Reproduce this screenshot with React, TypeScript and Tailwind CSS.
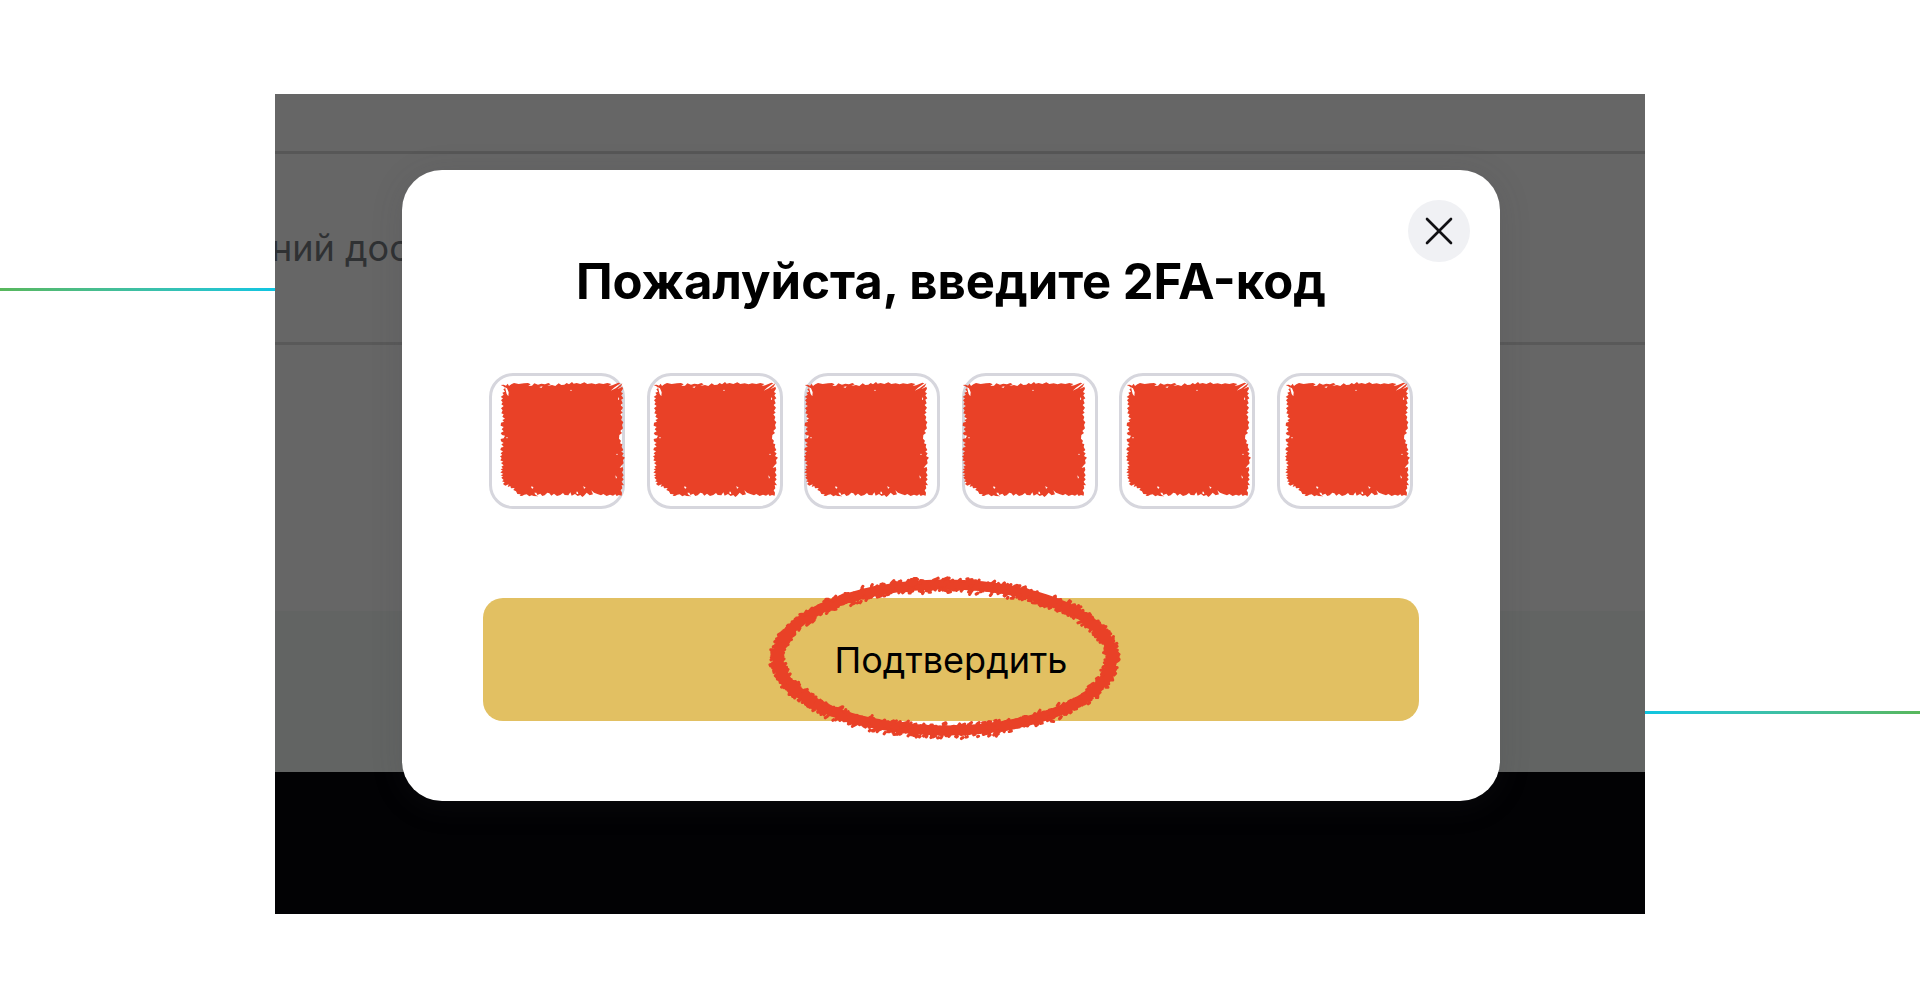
import React from 'react';
import { X } from 'lucide-react';

const digits = [
  { id: 1, mark: 'left-[11px]' },
  { id: 2, mark: 'left-[6px]' },
  { id: 3, mark: 'left-0' },
  { id: 4, mark: 'left-0' },
  { id: 5, mark: 'left-[7px]' },
  { id: 6, mark: 'left-[8px]' },
];

// Small seeded generator, so the crayon looks the same on every render
const createRandom = (seed: number) => () => {
  seed = (seed * 1664525 + 1013904223) % 4294967296;
  return seed / 4294967296;
};

// Short bristle strokes scattered along an ellipse
const buildBristles = (cx: number, cy: number, rx: number, ry: number, count: number) => {
  const random = createRandom(11);
  let d = '';
  for (let i = 0; i < count; i++) {
    const t = (i / count) * Math.PI * 2 + 0.04;
    const spread = (random() * 1.4 + random() * 0.6 - 1) * 8;
    const x = cx + (rx + spread) * Math.cos(t);
    const y = cy + (ry + spread) * Math.sin(t);
    const angle = -0.5 + (random() - 0.5) * 1.2;
    const length = 1 + random() * 2;
    const dx = Math.cos(angle) * length;
    const dy = Math.sin(angle) * length;
    d += `M${(x - dx / 2).toFixed(1)} ${(y - dy / 2).toFixed(1)}l${dx.toFixed(1)} ${dy.toFixed(1)}`;
  }
  return d;
};

const bristles = buildBristles(178, 84, 167, 73, 1900);

const CrayonSquare: React.FC<{ className: string }> = ({ className }) => (
  <svg viewBox="36 32 375 348" className={`pointer-events-none absolute top-2 h-[116px] w-[125px] ${className}`} aria-hidden="true">
    <path
      fill="#e94127"
      d="M38 44L47 43L54 46L59 40L63 47L70 42L78 38L92 41L108 39L120 38L128 42L121 47L132 46L139 39L150 43L160 40L171 42L181 38L188 42L178 47L192 44L202 47L212 39L220 44L229 43L236 38L243 42L252 35L257 40L266 38L277 41L289 36L298 41L311 39L323 42L333 39L346 41L358 38L370 41L362 47L373 45L391 37L397 39L378 52L368 61L383 54L403 39L399 48L388 57L403 49L405 55L399 65L405 69L400 75L406 84L400 88L404 99L398 104L405 112L399 121L404 127L397 132L403 140L400 149L406 156L402 164L405 174L397 182L402 188L394 194L393 205L399 211L396 219L403 222L401 230L406 239L400 244L407 249L402 257L411 262L405 269L407 279L400 286L395 293L404 290L406 299L402 306L407 315L402 321L407 327L401 334L408 345L401 344L403 354L398 360L402 367L401 376L393 374L386 377L382 372L375 376L366 373L356 377L346 371L339 375L330 372L318 367L310 360L315 372L305 375L296 367L288 376L283 380L277 374L269 377L261 371L251 376L247 366L241 375L230 374L225 368L217 374L207 377L198 370L190 376L184 369L178 367L170 375L163 377L157 370L148 374L145 367L139 367L143 374L151 378L137 377L131 375L124 378L116 372L109 373L102 377L95 376L98 372L88 371L84 363L76 359L80 353L69 354L67 347L59 350L62 342L52 346L45 341L50 336L42 333L47 329L40 322L45 318L38 315L46 311L37 306L44 301L38 297L45 294L40 289L47 285L39 278L46 274L37 270L41 263L36 258L43 254L38 249L45 243L37 239L39 232L47 229L40 222L47 218L39 213L38 206L47 204L51 196L42 194L38 188L47 183L41 177L47 170L38 166L39 157L48 154L43 149L51 145L43 139L47 132L40 129L44 120L39 114L47 107L40 102L44 96L39 90L45 84L38 80L47 73L43 67L51 64L46 57L52 53L46 48Z"
    />
    <g fill="#fff">
      <path d="M51 51L57 54L62 66L61 78L56 71ZM382 315L387 321L384 325ZM130 348L136 350L135 355L130 353ZM286 347L293 352L288 355ZM265 364L269 364L271 371L266 371ZM391 80L394 86L390 90ZM402 204L397 207L400 213ZM154 50L164 48L160 53Z" />
      <circle cx="249" cy="60" r="2" />
      <circle cx="57" cy="202" r="2" />
      <circle cx="387" cy="252" r="2" />
    </g>
  </svg>
);

const CrayonEllipse: React.FC = () => (
  <svg
    viewBox="0 0 356 168"
    className="pointer-events-none absolute -top-6 left-1/2 h-[168px] w-[356px] -translate-x-[184px]"
    fill="none"
    stroke="#e94127"
    strokeLinecap="round"
    aria-hidden="true"
  >
    <path strokeWidth="10" strokeLinecap="butt" d="M345 85A167 73 0 1 1 345 82" />
    <path strokeWidth="3" d={bristles} />
  </svg>
);

// Page that stays dimmed behind the dialog
const DimmedPage: React.FC = () => (
  <div className="col-start-1 row-start-1 flex flex-col overflow-hidden bg-[#666666]">
    <div className="h-[60px] border-b-3 border-[#575757]" />
    <div className="flex h-[191px] items-center border-b-3 border-[#595959]">
      <p className="-ml-1 text-4xl text-[#2f3133]">ний дос</p>
    </div>
    <div className="h-[266px]" />
    <div className="h-[161px] bg-[#626463]" />
    <div className="flex-1 bg-[#020204]" />
  </div>
);

export default function App() {
  return (
    <main className="flex min-h-screen items-center bg-white py-8 font-[Inter,'Noto_Sans',sans-serif] text-black">
      <div className="flex w-full">
        <div className="mt-[194px] h-[3px] flex-1 bg-linear-to-r from-[#58b75b] to-[#0cc5e2]" />

        <div className="grid w-full max-w-[1370px]">
          <DimmedPage />

          <div className="z-10 col-start-1 row-start-1 pt-[76px] pr-[145px] pb-[113px] pl-[127px]">
            <form
              role="dialog"
              aria-labelledby="title"
              onSubmit={(e) => e.preventDefault()}
              className="relative rounded-[40px] bg-white px-[81px] pt-[82px] pb-20 shadow-[0_4px_32px_rgba(60,60,66,0.15)]"
            >
              <button
                type="button"
                aria-label="Закрыть"
                className="absolute top-[30px] right-[30px] flex size-[62px] items-center justify-center rounded-full bg-[#f0f1f4]"
              >
                <X size={48} strokeWidth={1.3} className="text-[#111114]" />
              </button>

              <h1 id="title" className="text-center text-[49px] leading-[60px] font-bold">
                Пожалуйста, введите 2FA-код
              </h1>

              <div className="mt-[61px] flex justify-between px-[6px]">
                {digits.map((digit) => (
                  <div key={digit.id} className="relative">
                    <input
                      type="text"
                      inputMode="numeric"
                      maxLength={1}
                      aria-label={`Цифра ${digit.id}`}
                      className="block size-[136px] rounded-[24px] border-3 border-[#d6d6dd] bg-white text-center text-5xl"
                    />
                    <CrayonSquare className={digit.mark} />
                  </div>
                ))}
              </div>

              <div className="relative mt-[89px]">
                <button type="submit" className="h-[123px] w-full rounded-[20px] bg-[#e2c062] text-4xl">
                  Подтвердить
                </button>
                <CrayonEllipse />
              </div>
            </form>
          </div>
        </div>

        <div className="mt-[617px] h-[3px] flex-1 bg-linear-to-r from-[#0cc5e2] to-[#58b75b]" />
      </div>
    </main>
  );
}
